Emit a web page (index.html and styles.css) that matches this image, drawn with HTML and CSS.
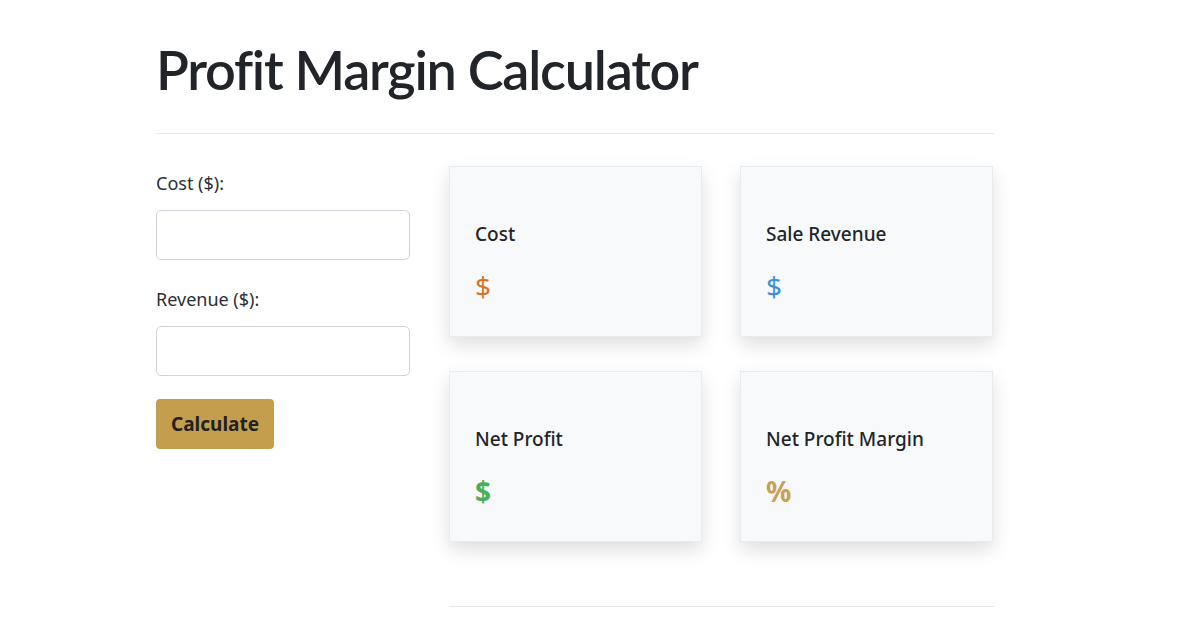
FILE: index.html
```html
<!DOCTYPE html>
<html lang="en">
<head>
<meta charset="utf-8">
<title>Profit Margin Calculator</title>
<link rel="stylesheet" href="styles.css">
</head>
<body>
<main class="page">
  <h1 class="title">Profit Margin Calculator</h1>
  <hr class="rule">
  <div class="layout">
    <form class="form">
      <label class="label" for="cost">Cost ($):</label>
      <input class="input" id="cost" type="text">
      <label class="label" for="revenue">Revenue ($):</label>
      <input class="input" id="revenue" type="text">
      <button class="btn" type="button">Calculate</button>
    </form>
    <section class="results">
      <div class="cards">
        <div class="card">
          <div class="card-label">Cost</div>
          <div class="card-value cost">$</div>
        </div>
        <div class="card">
          <div class="card-label">Sale Revenue</div>
          <div class="card-value revenue">$</div>
        </div>
        <div class="card">
          <div class="card-label">Net Profit</div>
          <div class="card-value profit">$</div>
        </div>
        <div class="card">
          <div class="card-label">Net Profit Margin</div>
          <div class="card-value margin">%</div>
        </div>
      </div>
      <hr class="rule bottom">
    </section>
  </div>
</main>
</body>
</html>
```
FILE: styles.css
```css
* { box-sizing: border-box; }
html, body { margin: 0; background: #fff; }
body {
  font-family: "Noto Sans", "Open Sans", sans-serif;
  color: #212529;
}
.page {
  width: 838px;
  margin-left: 156px;
  padding-top: 38px;
}
.title {
  margin: 0;
  height: 65px;
  font-family: Lato, "Noto Sans", sans-serif;
  font-size: 54px;
  font-weight: 600;
  line-height: 1.2;
  letter-spacing: -1.25px;
}
.rule {
  margin: 30px 0 0;
  border: 0;
  border-top: 1px solid #e6e7e9;
}
.layout {
  display: grid;
  grid-template-columns: 254px 545px;
  column-gap: 39px;
  margin-top: 32px;
}
.form {
  display: flex;
  flex-direction: column;
  padding-top: 4px;
}
.label {
  font-size: 18px;
  line-height: 26px;
  color: #2b2f33;
  font-weight: 400;
}
.input {
  margin-top: 14px;
  height: 50px;
  border: 1px solid #ced4da;
  border-radius: 5px;
  margin-bottom: 26px;
}
.btn {
  align-self: flex-start;
  margin-top: -3px;
  width: 118px;
  height: 50px;
  border: 0;
  border-radius: 4px;
  background: #c49e4d;
  color: #222;
  font-family: inherit;
  font-size: 19px;
  font-weight: 700;
}
.cards {
  display: grid;
  grid-template-columns: 253px 253px;
  column-gap: 38px;
  row-gap: 34px;
}
.card {
  height: 171px;
  background: #f8f9fa;
  border: 1px solid #e9ecef;
  box-shadow: 0 8px 18px rgba(0, 0, 0, 0.13);
  padding: 55px 25px 0;
}
.card-label {
  font-size: 19px;
  font-weight: 500;
  line-height: 24px;
}
.card-value {
  margin-top: 23px;
  font-size: 28px;
  line-height: 34px;
}
.cost { color: #d4732a; }
.revenue { color: #3a8fd6; }
.profit { color: #4cae58; font-weight: 700; }
.margin { color: #c79f55; font-weight: 700; }
.bottom { margin-top: 64px; }
```
